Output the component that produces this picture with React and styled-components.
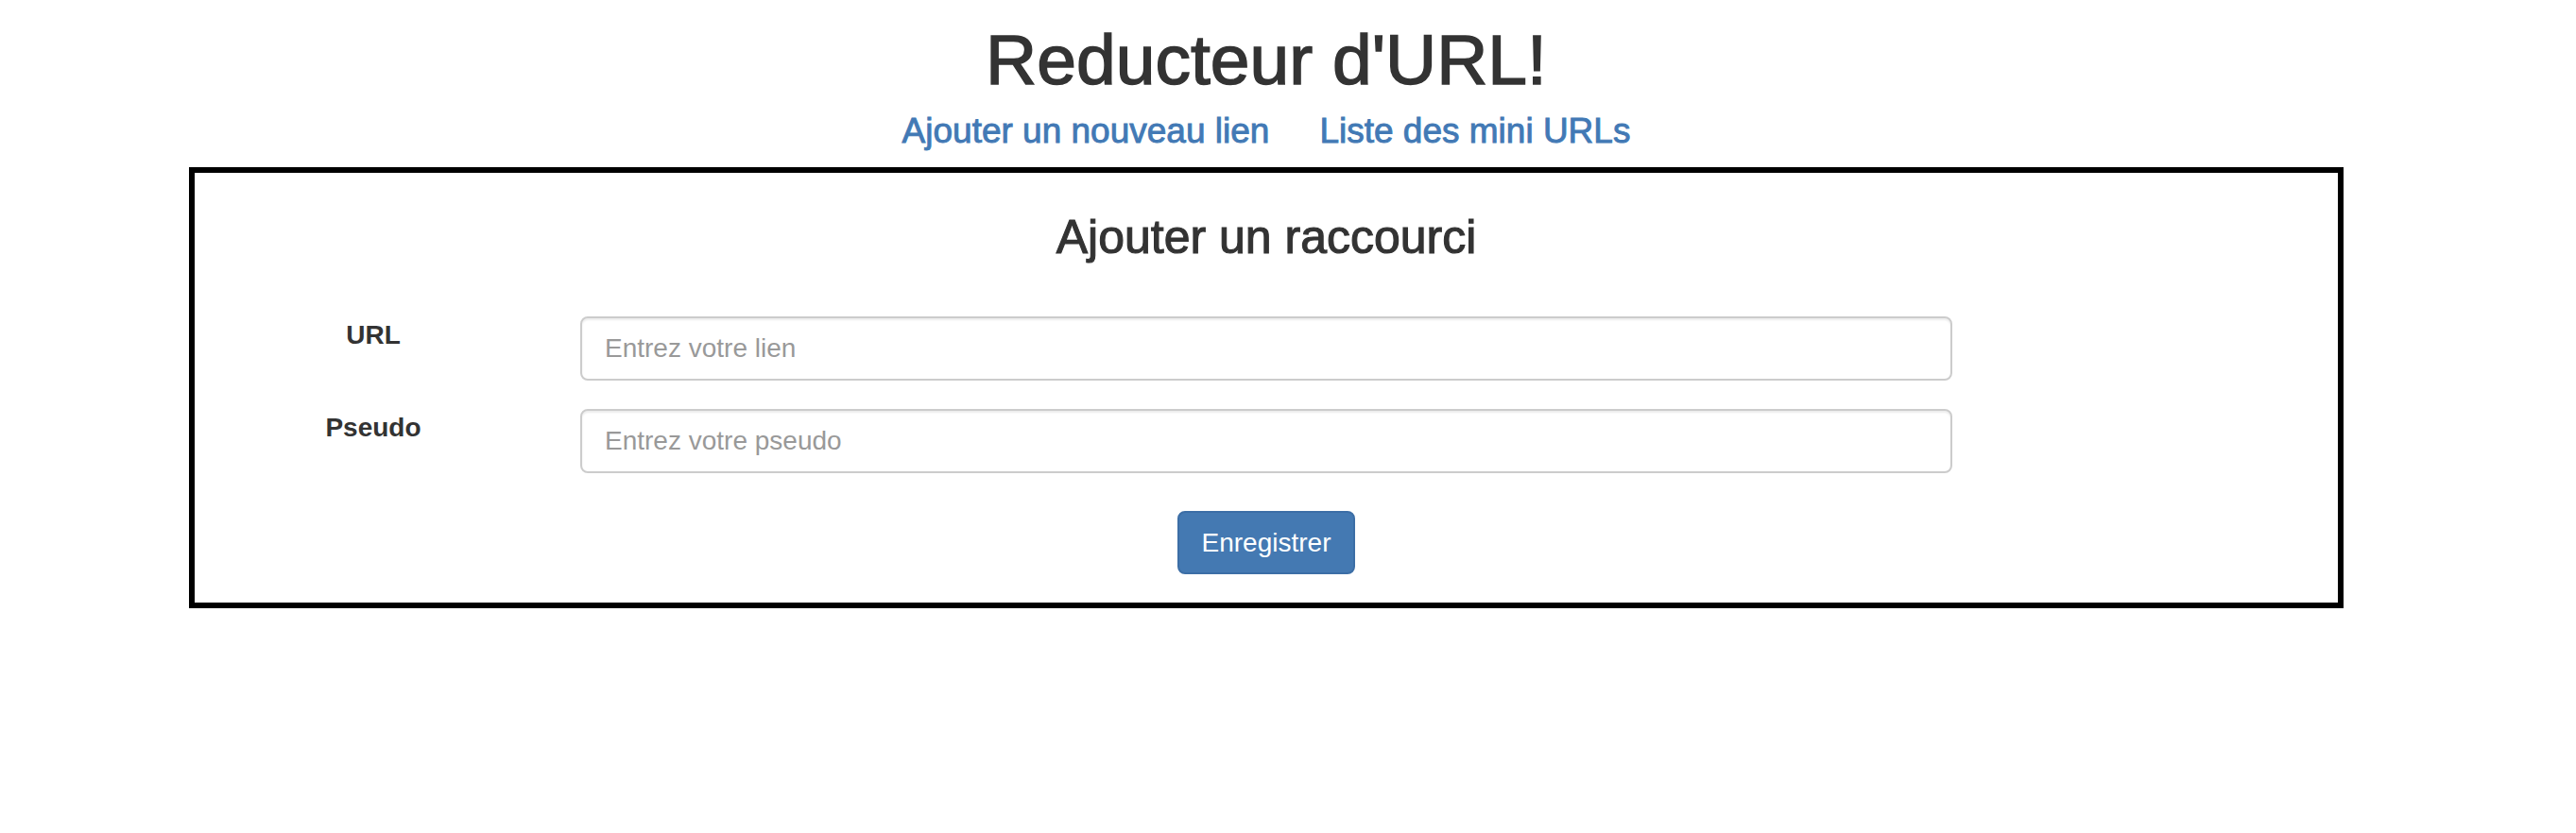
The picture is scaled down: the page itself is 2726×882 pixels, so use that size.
import React from "react";
import styled, { createGlobalStyle } from "styled-components";

const GlobalStyle = createGlobalStyle`
  html, body {
    margin: 0;
    padding: 0;
    background: #ffffff;
  }
  body {
    font-family: "Liberation Sans", Arial, Helvetica, sans-serif;
    color: #333333;
    font-size: 28px;
    line-height: 1.42857;
  }
  *, *::before, *::after { box-sizing: border-box; }
`;

const Page = styled.div`
  width: 2680px;
  display: flex;
  flex-direction: column;
  align-items: center;
`;

const Title = styled.h1`
  margin: 22px 0 0;
  font-size: 75px;
  line-height: 1.1;
  font-weight: 400;
  color: #333333;
  -webkit-text-stroke: 1.5px #333333;
`;

const Nav = styled.nav`
  display: flex;
  gap: 53px;
  margin-top: 14px;
`;

const NavLink = styled.a`
  font-size: 37px;
  line-height: 1.1;
  color: #4279b5;
  text-decoration: none;
  -webkit-text-stroke: 0.9px #4279b5;
  cursor: pointer;
`;

const Card = styled.section`
  width: 2280px;
  margin-top: 18px;
  border: 6px solid #000000;
  padding: 41px 0 30px;
  display: flex;
  flex-direction: column;
  align-items: stretch;
`;

const CardTitle = styled.h3`
  margin: 0 0 56px;
  text-align: center;
  font-size: 50px;
  line-height: 1.1;
  font-weight: 400;
  color: #333333;
  -webkit-text-stroke: 1.1px #333333;
`;

const Form = styled.form`
  display: flex;
  flex-direction: column;
  gap: 30px;
`;

const FieldRow = styled.div`
  display: grid;
  grid-template-columns: 2fr 8fr 2fr;
  align-items: start;
`;

const Label = styled.label`
  padding: 0 30px;
  text-align: center;
  font-weight: 700;
  font-size: 28px;
  line-height: 40px;
  color: #333333;
`;

const InputCell = styled.div`
  padding: 0 30px;
`;

const Input = styled.input`
  display: block;
  width: 100%;
  height: 68px;
  padding: 12px 24px;
  font-family: inherit;
  font-size: 28px;
  line-height: 40px;
  color: #555555;
  background: #ffffff;
  border: 2px solid #cccccc;
  border-radius: 8px;
  box-shadow: inset 0 2px 2px rgba(0, 0, 0, 0.075);
  outline: none;

  &::placeholder {
    color: #999999;
  }
`;

const Actions = styled.div`
  display: flex;
  justify-content: center;
  margin-top: 10px;
`;

const Button = styled.button`
  height: 67px;
  padding: 0 24px;
  font-family: inherit;
  font-size: 28px;
  line-height: 40px;
  color: #ffffff;
  background: #4479b2;
  border: 2px solid #3c6ea6;
  border-radius: 8px;
  cursor: pointer;
`;

export default function App() {
  return (
    <>
      <GlobalStyle />
      <Page>
        <Title>Reducteur d'URL!</Title>
        <Nav>
          <NavLink href="#">Ajouter un nouveau lien</NavLink>
          <NavLink href="#">Liste des mini URLs</NavLink>
        </Nav>
        <Card>
          <CardTitle>Ajouter un raccourci</CardTitle>
          <Form onSubmit={(e) => e.preventDefault()}>
            <FieldRow>
              <Label htmlFor="url">URL</Label>
              <InputCell>
                <Input id="url" type="text" placeholder="Entrez votre lien" />
              </InputCell>
            </FieldRow>
            <FieldRow>
              <Label htmlFor="pseudo">Pseudo</Label>
              <InputCell>
                <Input id="pseudo" type="text" placeholder="Entrez votre pseudo" />
              </InputCell>
            </FieldRow>
            <Actions>
              <Button type="submit">Enregistrer</Button>
            </Actions>
          </Form>
        </Card>
      </Page>
    </>
  );
}
